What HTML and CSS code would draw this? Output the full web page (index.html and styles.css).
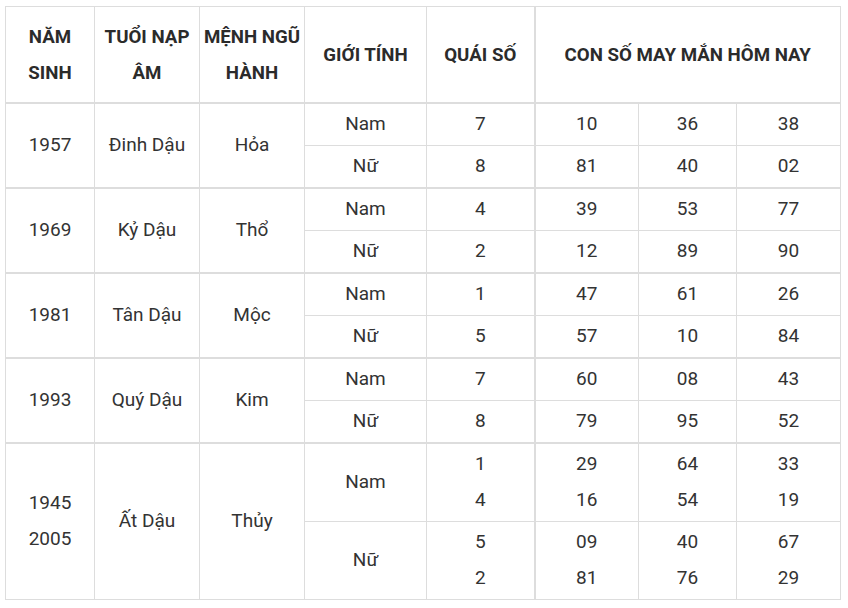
FILE: index.html
```html
<!DOCTYPE html>
<html lang="vi">
<head>
<meta charset="utf-8">
<link rel="stylesheet" href="styles.css">
</head>
<body>
<table class="lucky">
  <colgroup>
    <col class="c-year"><col class="c-tuoi"><col class="c-menh"><col class="c-gt"><col class="c-qs"><col class="c-n1"><col class="c-n2"><col class="c-n3">
  </colgroup>
  <thead>
    <tr>
      <th>NĂM<br>SINH</th>
      <th>TUỔI NẠP<br>ÂM</th>
      <th>MỆNH NGŨ<br>HÀNH</th>
      <th>GIỚI TÍNH</th>
      <th>QUÁI SỐ</th>
      <th colspan="3" class="sep">CON SỐ MAY MẮN HÔM NAY</th>
    </tr>
  </thead>
  <tbody>
    <tr class="grp">
      <td rowspan="2">1957</td><td rowspan="2">Đinh Dậu</td><td rowspan="2">Hỏa</td>
      <td>Nam</td><td>7</td><td class="sep">10</td><td>36</td><td>38</td>
    </tr>
    <tr>
      <td>Nữ</td><td>8</td><td class="sep">81</td><td>40</td><td>02</td>
    </tr>
    <tr class="grp">
      <td rowspan="2">1969</td><td rowspan="2">Kỷ Dậu</td><td rowspan="2">Thổ</td>
      <td>Nam</td><td>4</td><td class="sep">39</td><td>53</td><td>77</td>
    </tr>
    <tr>
      <td>Nữ</td><td>2</td><td class="sep">12</td><td>89</td><td>90</td>
    </tr>
    <tr class="grp">
      <td rowspan="2">1981</td><td rowspan="2">Tân Dậu</td><td rowspan="2">Mộc</td>
      <td>Nam</td><td>1</td><td class="sep">47</td><td>61</td><td>26</td>
    </tr>
    <tr>
      <td>Nữ</td><td>5</td><td class="sep">57</td><td>10</td><td>84</td>
    </tr>
    <tr class="grp">
      <td rowspan="2">1993</td><td rowspan="2">Quý Dậu</td><td rowspan="2">Kim</td>
      <td>Nam</td><td>7</td><td class="sep">60</td><td>08</td><td>43</td>
    </tr>
    <tr>
      <td>Nữ</td><td>8</td><td class="sep">79</td><td>95</td><td>52</td>
    </tr>
    <tr class="grp">
      <td rowspan="2">1945<br>2005</td><td rowspan="2">Ất Dậu</td><td rowspan="2">Thủy</td>
      <td>Nam</td><td>1<br>4</td><td class="sep">29<br>16</td><td>64<br>54</td><td>33<br>19</td>
    </tr>
    <tr>
      <td>Nữ</td><td>5<br>2</td><td class="sep">09<br>81</td><td>40<br>76</td><td>67<br>29</td>
    </tr>
  </tbody>
</table>
</body>
</html>
```
FILE: styles.css
```css
html, body {
  margin: 0;
  padding: 0;
  background: #ffffff;
}

body {
  padding: 6px 0 0 5px;
  font-family: Roboto, "Noto Sans", "Liberation Sans", sans-serif;
  color: #333333;
}

.lucky {
  border-collapse: collapse;
  table-layout: fixed;
  width: 835px;
  border: 1px solid #dddddd;
  font-size: 19px;
}

.c-year { width: 89px; }
.c-tuoi { width: 105px; }
.c-menh { width: 105px; }
.c-gt { width: 122px; }
.c-qs { width: 108px; }
.c-n1 { width: 104px; }
.c-n2 { width: 98px; }
.c-n3 { width: 104px; }

.lucky th,
.lucky td {
  border: 1px solid #dddddd;
  text-align: center;
  vertical-align: middle;
  line-height: 36px;
  padding: 2px 4px 3px;
}

.lucky th {
  font-size: 18.7px;
  font-weight: 700;
  color: #2b2b2b;
  padding: 11.5px 2px;
  border-bottom: 2px solid #dddddd;
}

.lucky tr.grp td {
  border-top: 2px solid #dddddd;
}

.lucky .sep {
  border-left: 2px solid #dddddd;
}
```
